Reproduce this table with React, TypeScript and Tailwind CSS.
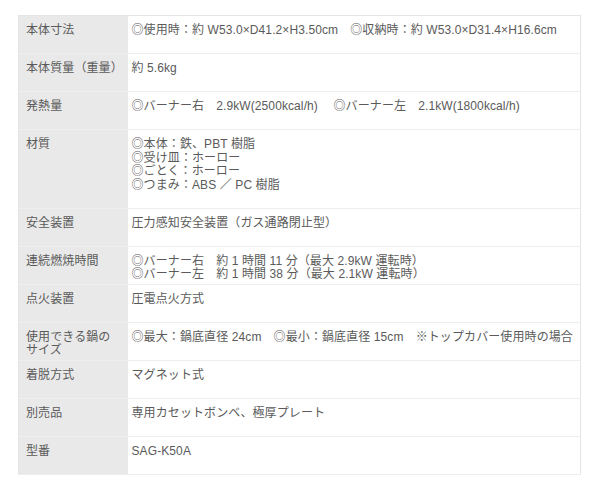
const rows: { label: React.ReactNode; value: React.ReactNode }[] = [
  {
    label: "本体寸法",
    value: "◎使用時：約 W53.0×D41.2×H3.50cm　◎収納時：約 W53.0×D31.4×H16.6cm",
  },
  { label: "本体質量（重量）", value: "約 5.6kg" },
  {
    label: "発熱量",
    value: "◎バーナー右　2.9kW(2500kcal/h)　 ◎バーナー左　2.1kW(1800kcal/h)",
  },
  {
    label: "材質",
    value: (
      <>
        ◎本体：鉄、PBT 樹脂
        <br />
        ◎受け皿：ホーロー
        <br />
        ◎ごとく：ホーロー
        <br />
        ◎つまみ：ABS ／ PC 樹脂
        <br />
        <br />
      </>
    ),
  },
  { label: "安全装置", value: "圧力感知安全装置（ガス通路閉止型）" },
  {
    label: "連続燃焼時間",
    value: (
      <>
        ◎バーナー右　約 1 時間 11 分（最大 2.9kW 運転時）
        <br />
        ◎バーナー左　約 1 時間 38 分（最大 2.1kW 運転時）
      </>
    ),
  },
  { label: "点火装置", value: "圧電点火方式" },
  {
    label: (
      <>
        使用できる鍋の
        <br />
        サイズ
      </>
    ),
    value: "◎最大：鍋底直径 24cm　◎最小：鍋底直径 15cm　※トップカバー使用時の場合",
  },
  { label: "着脱方式", value: "マグネット式" },
  { label: "別売品", value: "専用カセットボンベ、極厚プレート" },
  { label: "型番", value: "SAG-K50A" },
]

export default function App() {
  return (
    <div
      className="min-h-[494px] w-[600px] bg-white pt-[15px] pl-[18px] text-[12px] leading-[13.5px] tracking-[0.1px] text-[#5a5a5a]"
      style={{ fontFamily: '"Liberation Sans", "Noto Sans CJK JP", sans-serif' }}
    >
      <table className="w-[563px] border-collapse border border-[#e4e4e4]">
        <tbody>
          {rows.map((row, i) => (
            <tr key={i} className="h-[38px] border-b border-[#eeeeee]">
              <td className="w-[109px] bg-[#e9e9e9] px-[7px] pt-[8px] pb-[2px] align-top">
                {row.label}
              </td>
              <td className="px-[4px] pt-[8px] pb-[2px] align-top">{row.value}</td>
            </tr>
          ))}
        </tbody>
      </table>
    </div>
  )
}
